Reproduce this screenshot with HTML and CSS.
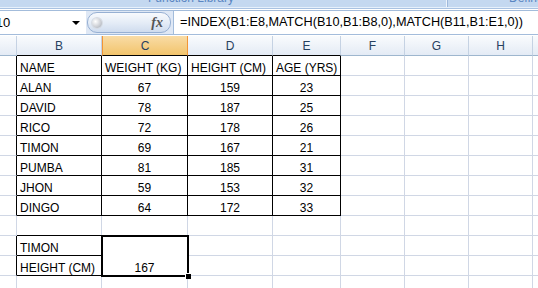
FILE: index.html
```html
<!DOCTYPE html>
<html lang="en">
<head>
    <meta charset="UTF-8">
    <title>INDEX MATCH</title>
    <link rel="stylesheet" href="styles.css">
</head>
<body>
    <div class="ribbon">
        <div class="group group-left"><span class="group-label">Function Library</span></div>
        <div class="group group-right"><span class="group-label">Defined Names</span></div>
    </div>

    <div class="formula-bar">
        <div class="namebox">
            <span class="name">B10</span>
            <span class="drop"></span>
        </div>
        <div class="fx-area">
            <div class="pill">
                <span class="knob"></span>
                <span class="fx">fx</span>
            </div>
        </div>
        <div class="formula">=INDEX(B1:E8,MATCH(B10,B1:B8,0),MATCH(B11,B1:E1,0))</div>
    </div>

    <div class="sheet">
        <table>
            <colgroup>
                <col class="w-a"><col class="w-b"><col class="w-c"><col class="w-d"><col class="w-e">
                <col class="w-f"><col class="w-g"><col class="w-h"><col class="w-i">
            </colgroup>
            <thead>
                <tr>
                    <th></th>
                    <th class="hb">B</th>
                    <th class="hb active">C</th>
                    <th class="hb">D</th>
                    <th class="hb">E</th>
                    <th>F</th>
                    <th>G</th>
                    <th>H</th>
                    <th></th>
                </tr>
            </thead>
            <tbody>
                <tr>
                    <td class="br"></td>
                    <td class="bx">NAME</td>
                    <td class="bx">WEIGHT (KG)</td>
                    <td class="bx">HEIGHT (CM)</td>
                    <td class="bx">AGE (YRS)</td>
                    <td></td><td></td><td></td><td></td>
                </tr>
                <tr>
                    <td class="br"></td>
                    <td class="bx">ALAN</td>
                    <td class="bx num">67</td>
                    <td class="bx num">159</td>
                    <td class="bx num">23</td>
                    <td></td><td></td><td></td><td></td>
                </tr>
                <tr>
                    <td class="br"></td>
                    <td class="bx">DAVID</td>
                    <td class="bx num">78</td>
                    <td class="bx num">187</td>
                    <td class="bx num">25</td>
                    <td></td><td></td><td></td><td></td>
                </tr>
                <tr>
                    <td class="br"></td>
                    <td class="bx">RICO</td>
                    <td class="bx num">72</td>
                    <td class="bx num">178</td>
                    <td class="bx num">26</td>
                    <td></td><td></td><td></td><td></td>
                </tr>
                <tr>
                    <td class="br"></td>
                    <td class="bx">TIMON</td>
                    <td class="bx num">69</td>
                    <td class="bx num">167</td>
                    <td class="bx num">21</td>
                    <td></td><td></td><td></td><td></td>
                </tr>
                <tr>
                    <td class="br"></td>
                    <td class="bx">PUMBA</td>
                    <td class="bx num">81</td>
                    <td class="bx num">185</td>
                    <td class="bx num">31</td>
                    <td></td><td></td><td></td><td></td>
                </tr>
                <tr>
                    <td class="br"></td>
                    <td class="bx">JHON</td>
                    <td class="bx num">59</td>
                    <td class="bx num">153</td>
                    <td class="bx num">32</td>
                    <td></td><td></td><td></td><td></td>
                </tr>
                <tr>
                    <td class="br"></td>
                    <td class="bx">DINGO</td>
                    <td class="bx num">64</td>
                    <td class="bx num">172</td>
                    <td class="bx num">33</td>
                    <td></td><td></td><td></td><td></td>
                </tr>
                <tr>
                    <td></td>
                    <td class="bb"></td>
                    <td class="bb"></td>
                    <td></td><td></td><td></td><td></td><td></td><td></td>
                </tr>
                <tr>
                    <td class="br"></td>
                    <td class="bx">TIMON</td>
                    <td class="bx num sel" rowspan="2">167</td>
                    <td></td><td></td><td></td><td></td><td></td><td></td>
                </tr>
                <tr>
                    <td class="br"></td>
                    <td class="bx">HEIGHT (CM)</td>
                    <td></td><td></td><td></td><td></td><td></td><td></td>
                </tr>
                <tr>
                    <td></td><td></td><td></td><td></td><td></td><td></td><td></td><td></td><td></td>
                </tr>
            </tbody>
        </table>
    </div>
</body>
</html>
```

FILE: styles.css
```css
html, body {
    margin: 0;
    padding: 0;
    width: 538px;
    height: 288px;
    overflow: hidden;
    background: #fff;
    font-family: 'Liberation Sans', Arial, sans-serif;
}

/* ribbon bottom edge */
.ribbon {
    display: flex;
    height: 7px;
    background: #c4d8f0;
    border-bottom: 1px solid #e6f0fb;
    box-shadow: 0 1px 0 #a9c2e2;
    overflow: hidden;
}

.group {
    height: 7px;
    overflow: hidden;
}

.group-left {
    width: 446px;
    border-right: 1px solid #eef4fc;
}

.group-right {
    flex: 1;
    border-left: 1px solid #9fb9dc;
}

.group-label {
    display: block;
    margin-top: -9px;
    font-size: 12px;
    line-height: 14px;
    color: #5a86c2;
    white-space: nowrap;
}

.group-left .group-label {
    padding-left: 148px;
}

.group-right .group-label {
    padding-left: 61px;
}

/* formula bar */
.formula-bar {
    display: flex;
    height: 23px;
    margin-top: 2px;
    border-top: 1px solid #a3bcdb;
    border-bottom: 1px solid #a3bcdb;
    background: #dfe8f5;
}

.namebox {
    width: 86px;
    display: flex;
    align-items: center;
    justify-content: space-between;
    background: #fff;
    overflow: hidden;
}

.name {
    margin-left: -13px;
    font-size: 13px;
    color: #000;
}

.drop {
    width: 0;
    height: 0;
    margin-right: 6px;
    border-left: 4px solid transparent;
    border-right: 4px solid transparent;
    border-top: 4px solid #000;
}

.fx-area {
    width: 86px;
    display: flex;
    align-items: center;
    padding-left: 1px;
}

.pill {
    width: 82px;
    height: 19px;
    display: flex;
    align-items: center;
    justify-content: space-between;
    border: 1px solid #97b0d3;
    border-radius: 10px;
    background: linear-gradient(#f8fafd, #e3ebf6 55%, #cfdcee);
}

.knob {
    width: 10px;
    height: 10px;
    margin-left: 4px;
    border-radius: 50%;
    background: radial-gradient(circle at 35% 35%, #fff, #c9ccd2 60%, #9ea4ad);
    box-shadow: 0 0 0 1px #d6dbe3;
}

.fx {
    margin-right: 7px;
    font-family: 'Liberation Serif', serif;
    font-style: italic;
    font-weight: bold;
    font-size: 14px;
    color: #555;
}

.formula {
    flex: 1;
    padding-left: 6px;
    background: #fff;
    border-left: 1px solid #a3bcdb;
    font-size: 12.7px;
    line-height: 23px;
    color: #000;
    white-space: nowrap;
    overflow: hidden;
}

/* grid */
.sheet {
    margin-top: 1px;
    overflow: hidden;
}

table {
    border-collapse: separate;
    border-spacing: 0;
    table-layout: fixed;
    width: 597px;
}

.w-a { width: 17px; }
.w-b { width: 85px; }
.w-c { width: 86px; }
.w-d { width: 85px; }
.w-e { width: 68px; }
.w-f { width: 64px; }
.w-g { width: 64px; }
.w-h { width: 64px; }
.w-i { width: 64px; }

th, td {
    box-sizing: border-box;
    height: 20px;
    padding: 0 3px;
    border-right: 1px solid #d0d7e5;
    border-bottom: 1px solid #d0d7e5;
    font-size: 12px;
    line-height: 14px;
    white-space: nowrap;
    overflow: hidden;
}

th {
    font-weight: normal;
    text-align: center;
    vertical-align: middle;
    color: #27415f;
    background: linear-gradient(#f9fbfd, #e4ebf5);
    border-right-color: #c5d2e3;
    border-bottom-color: #9eb6ce;
}

th.active {
    background: linear-gradient(#f9dca6, #f2c46c);
    border-right-color: #f29536;
    border-left: 1px solid #f29536;
    border-bottom-color: #f29536;
}

th.hb {
    border-bottom-color: #000;
}

td {
    text-align: left;
    vertical-align: bottom;
    color: #000;
}

td.num {
    text-align: center;
}

td.bx {
    border-right-color: #000;
    border-bottom-color: #000;
}

td.br {
    border-right-color: #000;
}

td.bb {
    border-bottom-color: #000;
}

/* active merged cell with selection frame */
td.sel {
    position: relative;
    overflow: visible;
}

td.sel::before {
    content: "";
    position: absolute;
    left: -1px;
    top: -1px;
    right: -2px;
    bottom: -2px;
    border: 2px solid #000;
    box-shadow: inset 0 0 0 1px #fff;
}

td.sel::after {
    content: "";
    position: absolute;
    right: -4px;
    bottom: -4px;
    width: 5px;
    height: 5px;
    background: #000;
    border-left: 1px solid #fff;
    border-top: 1px solid #fff;
}
```
